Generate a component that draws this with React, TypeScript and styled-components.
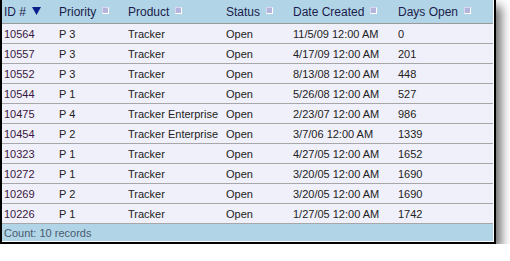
import React from 'react';
import styled, { createGlobalStyle } from 'styled-components';

const GlobalStyle = createGlobalStyle`
  body {
    margin: 0;
    background: #ffffff;
    font-family: "Liberation Sans", Arial, sans-serif;
  }
`;

const Frame = styled.div`
  width: 491px;
  padding: 0 1px 1px 0;
  border: 2px solid #000;
  border-top: none;
  background: #fff;
  box-shadow: 5px 6px 10px rgba(0, 0, 0, 0.6);
`;

const cols = '53px 69px 98px 67px 105px 99px';

const HeaderRow = styled.div`
  display: grid;
  grid-template-columns: ${cols};
  height: 23px;
  background: #b1d5e6;
  border-bottom: 1px solid #9a9a9a;
  align-items: center;
`;

const HeaderCell = styled.div<{ $first?: boolean }>`
  display: flex;
  align-items: center;
  gap: 6px;
  padding-left: ${(p) => (p.$first ? '2px' : '4px')};
  font-size: 12px;
  color: #1c1c4c;
  padding-top: 1px;
`;

const SortSquare = styled.span`
  width: 5px;
  height: 5px;
  background: #b4b4dc;
  border: 1px solid #fff;
  border-left-color: #d8d8f0;
  border-top-color: #d8d8f0;
  box-sizing: content-box;
  margin-top: -3px;
`;

const Row = styled.div`
  display: grid;
  grid-template-columns: ${cols};
  height: 19px;
  background: #f0f0fa;
  border-bottom: 1px solid #a7a7a7;
  align-items: center;
`;

const Cell = styled.div<{ $id?: boolean }>`
  padding-left: ${(p) => (p.$id ? '2px' : '4px')};
  font-size: 11px;
  color: ${(p) => (p.$id ? '#3a1640' : '#222')};
  white-space: nowrap;
`;

const Footer = styled.div`
  height: 17px;
  background: #b1d5e6;
  font-size: 11px;
  color: #4a5a70;
  padding-left: 2px;
  display: flex;
  align-items: center;
`;

const headers = ['ID #', 'Priority', 'Product', 'Status', 'Date Created', 'Days Open'];

const rows = [
  ['10564', 'P 3', 'Tracker', 'Open', '11/5/09 12:00 AM', '0'],
  ['10557', 'P 3', 'Tracker', 'Open', '4/17/09 12:00 AM', '201'],
  ['10552', 'P 3', 'Tracker', 'Open', '8/13/08 12:00 AM', '448'],
  ['10544', 'P 1', 'Tracker', 'Open', '5/26/08 12:00 AM', '527'],
  ['10475', 'P 4', 'Tracker Enterprise', 'Open', '2/23/07 12:00 AM', '986'],
  ['10454', 'P 2', 'Tracker Enterprise', 'Open', '3/7/06 12:00 AM', '1339'],
  ['10323', 'P 1', 'Tracker', 'Open', '4/27/05 12:00 AM', '1652'],
  ['10272', 'P 1', 'Tracker', 'Open', '3/20/05 12:00 AM', '1690'],
  ['10269', 'P 2', 'Tracker', 'Open', '3/20/05 12:00 AM', '1690'],
  ['10226', 'P 1', 'Tracker', 'Open', '1/27/05 12:00 AM', '1742'],
];

const SortArrow = () => (
  <svg width="9" height="8" viewBox="0 0 9 8" style={{ marginTop: -3 }}>
    <polygon points="0,0 9,0 4.5,8" fill="#0b1f8c" />
  </svg>
);

const App = () => (
  <>
    <GlobalStyle />
    <Frame>
      <HeaderRow>
        {headers.map((h, i) => (
          <HeaderCell key={h} $first={i === 0}>
            {h}
            {i === 0 ? <SortArrow /> : <SortSquare />}
          </HeaderCell>
        ))}
      </HeaderRow>
      {rows.map((r) => (
        <Row key={r[0]}>
          {r.map((c, i) => (
            <Cell key={i} $id={i === 0}>
              {c}
            </Cell>
          ))}
        </Row>
      ))}
      <Footer>Count: 10 records</Footer>
    </Frame>
  </>
);

export default App;
